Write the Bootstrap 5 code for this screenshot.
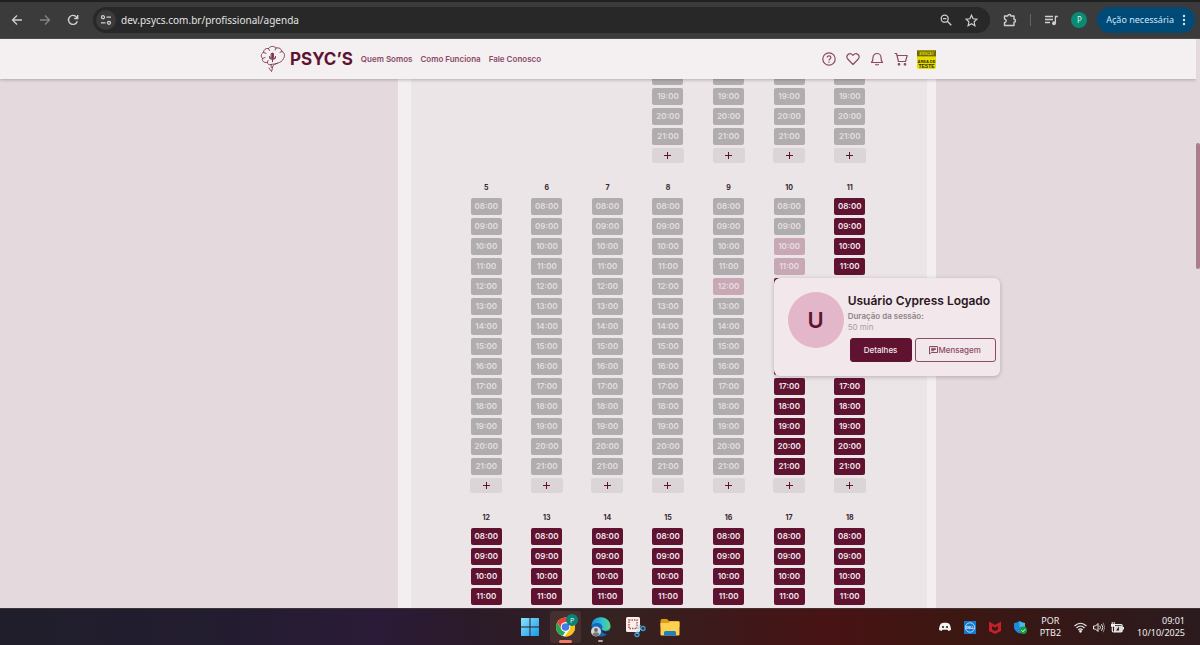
<!DOCTYPE html>
<html lang="pt-BR">
<head>
<meta charset="utf-8">
<meta name="viewport" content="width=device-width, initial-scale=1">
<title>Agenda | PSYC'S</title>
<link href="https://cdn.jsdelivr.net/npm/bootstrap@5.3.0/dist/css/bootstrap.min.css" rel="stylesheet">
<style>
:root { --wine: #5f1330; --wine-soft: #8b4a66; --ui: "Noto Sans", "Open Sans", sans-serif; --brand: "Inter", "Lato", sans-serif; }
body { font-family: var(--brand); font-size: 8px; line-height: 12px; }
button { font-family: inherit; }
.chrome-bar { background: #3b3b3b; height: 39px; border-top: 2px solid #1f2020; border-bottom: 1px solid #4c4c4c; padding: 0 5px 0 7px; gap: 10px; font-family: var(--ui); color: #dcdcdc; }
.tool { background: none; border: 0; padding: 0; width: 20px; height: 20px; color: #cfcfcf; display: grid; place-items: center; }
.address { background: #282828; border-radius: 13px; height: 26px; padding: 0 9px 0 3px; gap: 5px; }
.site-info { background: #3b3b3b; border-radius: 50%; }
.address input { background: none; border: 0; outline: 0; color: #e3e3e3; font-size: 10px; line-height: 16px; padding: 0; min-width: 0; }
.profile-dot { background: #0b8a74; color: #d8f5ee; width: 16px; height: 16px; border-radius: 50%; border: 0; padding: 0; font-size: 8px; line-height: 16px; }
.alert-pill { background: #004a77; color: #cfe6fb; border: 0; border-radius: 13px; height: 26px; padding: 0 9px; font-size: 9px; }
.viewport { background: #e4dade; }
.site-header { background: #f4f0f1; height: 40px; box-shadow: 0 1px 3px rgba(60, 40, 50, .3); z-index: 5; }
.site-width { width: 100%; max-width: 676px; margin: 0 auto; }
.brand-name { font-size: 17px; line-height: 24px; font-weight: 700; color: var(--wine); }
.site-link { color: var(--wine-soft); font-size: 8px; font-weight: 600; text-decoration: none; }
.header-actions { gap: 9px; }
.icon-button { background: none; border: 0; padding: 0; color: var(--wine-soft); width: 15px; height: 15px; display: grid; place-items: center; }
.avatar { width: 19px; height: 19px; display: block; }
.agenda { max-width: 538px; background: #ebe5e7; border: solid #f3eff0; border-width: 0 9px 0 13px; padding: 0 47px 0 45px; }
.calendar { margin-top: -11px; }
.week { display: grid; grid-template-columns: repeat(7, 1fr); margin-bottom: 19px; }
.day { display: flex; flex-direction: column; align-items: center; gap: 3px; }
.day-number { font-size: 7px; font-weight: 700; color: #35262c; margin-bottom: 1px; }
.slot { width: 31px; height: 17px; border: 0; border-radius: 2px; padding: 0; font-size: 8px; line-height: 17px; font-weight: 600; background: var(--wine); color: #f3e8ec; display: block; }
.slot.past { background: #b1adae; color: #e3dfe0; }
.slot.booked { background: #c8a8b5; color: #eadde2; }
.add-slot { width: 32px; height: 15px; border: 0; border-radius: 2px; padding: 0; background: #dcd5d8; color: var(--wine); display: grid; place-items: center; }
.session-pop { left: 0; top: 0; width: 226px; height: 98px; background: #f2e7eb; border-radius: 6px; box-shadow: 0 1px 4px rgba(60, 30, 45, .28); padding: 14px 4px 14px 14px; z-index: 3; }
.initial { width: 56px; height: 56px; border-radius: 50%; background: #e3b7c9; color: var(--wine); font-size: 22px; line-height: 56px; font-weight: 600; text-align: center; }
.session-name { font-size: 12px; line-height: 18px; font-weight: 600; color: #28171f; white-space: nowrap; }
.session-label { font-size: 8px; line-height: 12px; font-weight: 600; color: #8f858a; }
.session-time { font-size: 8px; line-height: 11px; color: #a79ea2; }
.session-actions { gap: 3px; margin: 5px 0 0 2px; }
.action { height: 24px; border-radius: 3px; border: 1px solid var(--wine-soft); font-size: 8px; font-weight: 500; padding: 0; background: none; color: var(--wine-soft); }
.action.solid { background: var(--wine); border-color: var(--wine); color: #f5e9ee; width: 62px; }
.scroll-track { width: 4px; background: #e4dade; padding-top: 104px; }
.scroll-thumb { height: 126px; background: #ab7d8d; border-radius: 2px; }
.taskbar { height: 37px; border-top: 1px solid #3f3234; background: linear-gradient(90deg, #201e2b 0, #231c30 20%, #2b1b38 31%, #2b1a28 40%, #342321 50%, #3d191b 60%, #481314 69%, #3c1712 80%, #2b1a1e 100%); font-family: var(--ui); color: #f2eeee; }
.task-app { width: 31px; height: 32px; border: 0; padding: 0; background: none; border-radius: 3px; }
.task-app.current { background: #45302f; }
.tray { right: 15px; top: 0; height: 36px; gap: 13px; font-size: 9px; line-height: 12px; }
.tray-status { gap: 6px; }
</style>
</head>
<body class="vh-100 d-flex flex-column overflow-hidden">

<div class="chrome-bar d-flex align-items-center flex-shrink-0">
  <div class="d-flex gap-2">
    <button class="tool" aria-label="Voltar"><svg width="12" height="12" viewBox="0 0 12 12" fill="none" stroke="currentColor" stroke-width="1.3"><path d="M11 6H2M6 1.5 1.5 6 6 10.5"/></svg></button>
    <button class="tool opacity-50" aria-label="Avançar"><svg width="12" height="12" viewBox="0 0 12 12" fill="none" stroke="currentColor" stroke-width="1.3"><path d="M1 6h9M6 1.5 10.500 6 6 10.500"/></svg></button>
    <button class="tool" aria-label="Recarregar"><svg width="12" height="12" viewBox="0 0 12 12" fill="none" stroke="currentColor" stroke-width="1.400"><path d="M10.300 7.200A4.500 4.500 0 1 1 9.600 3.200L10.500 4.300M10.700 1v3.500H7.200"/></svg></button>
  </div>
  <div class="address d-flex align-items-center flex-grow-1">
    <button class="tool site-info" aria-label="Informações do site"><svg width="12" height="12" viewBox="0 0 12 12" fill="none" stroke="currentColor" stroke-width="1.300"><circle cx="3" cy="3.200" r="1.500"/><path d="M6.500 3.200H11M1 8.800h4.500"/><circle cx="9" cy="8.800" r="1.500"/></svg></button>
    <input class="flex-grow-1" aria-label="Endereço" value="dev.psycs.com.br/profissional/agenda">
    <button class="tool" aria-label="Zoom"><svg width="12" height="12" viewBox="0 0 12 12" fill="none" stroke="currentColor" stroke-width="1.300"><circle cx="4.700" cy="4.700" r="3.500"/><path d="m7.300 7.300 4 4M3 4.700h3.400"/></svg></button>
    <button class="tool" aria-label="Favoritar"><svg width="13" height="13" viewBox="0 0 13 13" fill="none" stroke="currentColor" stroke-width="1.200"><path d="m6.500 1.200 1.600 3.600 3.900.4-2.900 2.600.8 3.900-3.400-2-3.400 2 .8-3.900L1 5.200l3.900-.4z"/></svg></button>
  </div>
  <button class="tool" aria-label="Extensões"><svg width="14" height="14" viewBox="0 0 14 14" fill="none" stroke="currentColor" stroke-width="1.400" stroke-linejoin="round"><path d="M1.500 3h3.300a1.500 1.500 0 0 1 3 0H11v3.300a1.500 1.500 0 0 1 0 3v3.200H1.500V9.500a1.700 1.700 0 0 0 0-3.400z"/></svg></button>
  <span class="vr my-auto" style="height:12px"></span>
  <button class="tool" aria-label="Mídia"><svg width="13" height="11" viewBox="0 0 13 11" fill="none" stroke="currentColor" stroke-width="1.300"><path d="M0 1.500h8M0 4.500h8M0 7.500h5M12.800 1.500h-2.400v6.700"/><circle cx="9" cy="8.300" r="1.300" fill="currentColor"/></svg></button>
  <button class="profile-dot" aria-label="Perfil">P</button>
  <button class="alert-pill d-flex align-items-center gap-2">Ação necessária <svg width="4" height="12" viewBox="0 0 4 12" fill="currentColor"><circle cx="2" cy="2" r="1.200"/><circle cx="2" cy="6" r="1.200"/><circle cx="2" cy="10" r="1.200"/></svg></button>
</div>

<div class="viewport d-flex flex-grow-1 overflow-hidden">
  <div class="d-flex flex-column flex-grow-1 overflow-hidden">
    <header class="site-header position-relative d-flex align-items-center flex-shrink-0">
      <div class="site-width d-flex align-items-center">
        <a class="d-flex align-items-center gap-1 text-decoration-none me-2" href="#">
          <svg width="26" height="28" viewBox="0 0 26 28" fill="none" stroke="#7b3550" stroke-width=".9" stroke-linecap="round"><path d="M17.500 18.200c-2 1.300-4 .6-6.500 1.300-2 .5-3.500-.5-3.700-2C4 18 2 16 2.500 13.500.5 11.500 1 8.500 3.500 7.500 3.500 4.500 6 3 8.500 3.500 10.500.8 14 .8 16 3c3-.8 5.500 1 6 3.500 3 1.500 3 5 1.500 7-.8 2.500-3.500 4-6 4.700-2 .6-4.500 1.300-5 3.800-.3 1.500-.2 3-1 4.500-1-1-1.500-2.500-2.500-3.500M11 19.500l.3 3M8.500 3.500l1 2M3.500 7.500l2.500.8M2.500 13.500l2.500-1M7.500 17.500l.5-2M16 3l-.8 2M22 6.500l-2 .8"/><path d="M12.500 8v8.500M9.500 11.500c0 3.500 6 3.500 6 0" stroke-width="1.100"/><path d="M11.500 8.500h2v4h-2z" fill="#7b3550"/></svg>
          <span class="brand-name">PSYC’S</span>
        </a>
        <nav class="d-flex gap-2">
          <a class="site-link" href="#">Quem Somos</a>
          <a class="site-link" href="#">Como Funciona</a>
          <a class="site-link" href="#">Fale Conosco</a>
        </nav>
        <div class="header-actions d-flex align-items-center ms-auto">
          <button class="icon-button" aria-label="Ajuda"><svg width="14" height="14" viewBox="0 0 14 14" fill="none" stroke="currentColor" stroke-width="1.200"><circle cx="7" cy="7" r="6.200"/><path d="M5.200 5.600c0-2.400 3.700-2.300 3.700 0C8.900 7 7 6.900 7 8.400M7 9.500v1.200"/></svg></button>
          <button class="icon-button" aria-label="Favoritos"><svg width="14" height="14" viewBox="0 0 14 14" fill="none" stroke="currentColor" stroke-width="1.200" stroke-linejoin="round"><path d="M7 12.500 1.700 7C-.7 4 3.300-.6 7 3.300c3.700-3.900 7.700.7 5.300 3.700z"/></svg></button>
          <button class="icon-button" aria-label="Notificações"><svg width="14" height="14" viewBox="0 0 14 14" fill="none" stroke="currentColor" stroke-width="1.200" stroke-linejoin="round"><path d="M1.500 10.500C3 9 3 7.500 3 5.500a4 4 0 0 1 8 0c0 2 0 3.500 1.500 5zM5.500 12c.5 1.300 2.500 1.300 3 0"/></svg></button>
          <button class="icon-button" aria-label="Carrinho"><svg width="14" height="14" viewBox="0 0 14 14" fill="none" stroke="currentColor" stroke-width="1.200" stroke-linejoin="round"><path d="M.5 1.500h2l2 8h7l1.700-6H3.200"/><circle cx="5" cy="12.300" r=".8" fill="currentColor"/><circle cx="11" cy="12.300" r=".8" fill="currentColor"/></svg></button>
          <a href="#" aria-label="Minha conta"><svg class="avatar" viewBox="0 0 19 19"><rect width="19" height="19" rx="2" fill="#e6dc00"/><rect width="19" height="7" rx="1" fill="#6d680f"/><path d="M1 .8h17M0 6.500h19" stroke="#b9b10d"/><g font-family="Liberation Sans, sans-serif" font-weight="700" text-anchor="middle"><text x="9.500" y="5" font-size="3" fill="#e6dc00">ATENÇÃO</text><text x="9.500" y="12.500" font-size="4" fill="#2b2908">ÁREA DE</text><text x="9.500" y="17.500" font-size="5" fill="#2b2908">TESTE</text></g></svg></a>
        </div>
      </div>
    </header>
    <main class="site-width d-flex flex-grow-1 justify-content-end" style="min-height:0">
      <section class="agenda w-100" aria-label="Agenda"><div class="calendar" id="calendar"></div></section>
    </main>
  </div>
  <div class="scroll-track flex-shrink-0"><div class="scroll-thumb"></div></div>
</div>

<footer class="taskbar position-relative d-flex align-items-center justify-content-center flex-shrink-0">
  <div class="d-flex gap-1">
    <button class="task-app" aria-label="Iniciar"><svg width="20" height="20" viewBox="0 0 20 20"><defs><linearGradient id="win" x2="1" y2="1"><stop stop-color="#8fe3ff"/><stop offset="1" stop-color="#139ae8"/></linearGradient></defs><path fill="url(#win)" d="M1 1h8.500v8.500H1zM10.500 1H19v8.500h-8.500zM1 10.500h8.500V19H1zM10.500 10.500H19V19h-8.500z"/></svg></button>
    <button class="task-app current" aria-label="Chrome"><svg width="31" height="32" viewBox="0 0 31 32"><circle cx="15.500" cy="16" r="9.500" fill="#fff"/><path d="M7.300 11.200A9.500 9.500 0 0 1 23.700 11.200H15.500L11.400 18.400z" fill="#ea4335"/><path d="M7.300 11.200 11.400 18.400l4.100 2.400-3 4.200A9.500 9.500 0 0 1 7.300 11.200" fill="#2aa552"/><path d="M23.700 11.200A9.500 9.500 0 0 1 14.500 25.500l5.100-7.100-1.500-7.200z" fill="#fbc116"/><circle cx="15.500" cy="16" r="4.800" fill="#fff"/><circle cx="15.500" cy="16" r="3.800" fill="#3f7ee8"/><circle cx="22" cy="9" r="6" fill="#0b8273"/><text x="22" y="11.500" font-size="7" font-family="Noto Sans, sans-serif" text-anchor="middle" fill="#d8f5ee">P</text><rect x="9" y="29" width="13" height="3" rx="1.500" fill="#ef7b62"/></svg></button>
    <button class="task-app" aria-label="Edge"><svg width="31" height="32" viewBox="0 0 31 32"><defs><linearGradient id="edge" x2="1"><stop stop-color="#1b8be0"/><stop offset=".6" stop-color="#30c3d2"/><stop offset="1" stop-color="#62d667"/></linearGradient></defs><circle cx="16" cy="16" r="9.500" fill="#1269b8"/><path d="M6.500 15C7 3 25 4 25.500 15c0 5-7 6-9 3 2-1 1-6-4-6-3 0-5 1-6 3z" fill="url(#edge)"/><path d="M16 18c2 3 6 3 9.500 1l-3 4.500c-4-.5-6-2.500-6.500-5.500" fill="#3a201f"/><circle cx="11" cy="20.500" r="5" fill="#d4d4d4"/><circle cx="11" cy="19" r="1.900" fill="#666"/><path d="M7.500 23.500c1-3 6-3 7 0-2 2-5 2-7 0" fill="#777"/><rect x="13" y="29" width="5" height="2" rx="1" fill="#aaa"/></svg></button>
    <button class="task-app" aria-label="Ferramenta de Captura"><svg width="22" height="22" viewBox="0 0 22 22"><rect x="2" y="1" width="14" height="15" rx="1.500" fill="#f2f0f0"/><rect x="5" y="4" width="8" height="8.500" fill="none" stroke="#d75138" stroke-width="1.500" stroke-dasharray="1.500 1"/><path d="m12 10 6 4M16 9l-3 9" stroke="#bfe2f5" stroke-width="1.500"/><g fill="none" stroke="#3a9ed8" stroke-width="1.300"><circle cx="19" cy="12.500" r="2"/><circle cx="13" cy="18.500" r="2"/></g></svg></button>
    <button class="task-app" aria-label="Explorador de Arquivos"><svg width="20" height="20" viewBox="0 0 20 20"><path d="M.5 3.500q0-1.500 1.500-1.500h5l2 2H18q1.500 0 1.500 1.500V10H.5z" fill="#dd9c11"/><path d="M.5 6h8l1.500-1.500h9.500v13q0 1-1 1h-17q-1 0-1-1z" fill="#fdd04d"/><path d="M4 18.500v-3q0-1.500 1.500-1.500h9q1.500 0 1.500 1.500v3z" fill="#1f7fc4"/></svg></button>
  </div>
  <div class="tray position-absolute d-flex align-items-center">
    <svg width="12" height="10" viewBox="0 0 12 10"><path d="M2 1.500 4.500.8h3l2.500.7c1.500 2 2 4.500 2 6.500L9.500 9 8.500 7.800h-5L2.500 9 0 8c0-2 .5-4.500 2-6.500" fill="#f4f4f4"/><circle cx="4" cy="5" r="1.100" fill="#3a1815"/><circle cx="8" cy="5" r="1.100" fill="#3a1815"/></svg>
    <svg width="12" height="13" viewBox="0 0 12 13"><rect width="12" height="13" fill="#1679cf"/><circle cx="6" cy="6.500" r="4.700" fill="none" stroke="#d9ecfa" stroke-width=".8"/><text x="6" y="7.500" font-size="3" font-weight="700" text-anchor="middle" font-family="Liberation Sans, sans-serif" fill="#fff">DELL</text></svg>
    <svg width="12" height="13" viewBox="0 0 12 13"><path d="M0 .5 6 4l6-3.500V10l-6 3-6-3zm3 4.500v3.500l3 1.500 3-1.500V5L6 6.700z" fill="#c5202a"/></svg>
    <svg width="13" height="13" viewBox="0 0 13 13"><path d="M5.500 0Q8 1.800 11 2v4c0 3-2.500 5-5.500 6.500C2.500 11 0 9 0 6V2Q3 1.800 5.500 0" fill="#1b8bdc"/><path d="M5.500 0Q8 1.800 11 2v4H5.500z" fill="#4fb6f0"/><circle cx="9.300" cy="9.300" r="3.700" fill="#189b43"/><path d="m7.500 9.300 1.400 1.400 2.300-2.500" stroke="#fff" fill="none"/></svg>
    <div class="text-center">POR<br>PTB2</div>
    <div class="tray-status d-flex align-items-center">
      <svg width="13" height="11" viewBox="0 0 13 11" fill="none" stroke="#eee" stroke-width="1.100"><path d="M.5 4Q6.500-1.500 12.500 4M2.500 6Q6.500 2 10.500 6M4.300 8Q6.500 5.800 8.700 8"/><circle cx="6.500" cy="9.300" r=".8" fill="#eee"/></svg>
      <svg width="12" height="11" viewBox="0 0 12 11" fill="none" stroke="#eee"><path d="M.5 4h2L5 1.500v8L2.500 7h-2zM6.700 3.700q1.500 1.800 0 3.600M8.500 2.200q2.800 3.300 0 6.600"/><path d="M10.200.8q3 4.700 0 9.400" opacity=".5"/></svg>
      <svg width="13" height="11" viewBox="0 0 13 11"><path d="M3 4h8v6H3z" fill="#eee" opacity=".9"/><path d="M3.500 2.600H10q1.200 0 1.200 1.200v5q0 1.200-1.200 1.200H2.500Q1.300 10 1.300 8.800V6" fill="none" stroke="#eee" stroke-width="1.200"/><path d="m5 8.500 3-4v4z" fill="#3a1815"/><path d="M11.500 5H13v2.500h-1.500zM0 2h4v2.500H2.500L1.500 6 0 4.500zM.7 0h1v2h-1zM2.700 0h1v2h-1z" fill="#eee"/></svg>
    </div>
    <div class="text-end">09:01<br>10/10/2025</div>
  </div>
</footer>

<template id="session-template">
  <div class="session-pop position-absolute d-flex text-start">
    <div class="initial flex-shrink-0 me-1">U</div>
    <div class="flex-grow-1">
      <div class="session-name">Usuário Cypress Logado</div>
      <div class="session-label">Duração da sessão:</div>
      <div class="session-time">50 min</div>
      <div class="session-actions d-flex">
        <button class="action solid">Detalhes</button>
        <button class="action flex-grow-1 d-flex align-items-center justify-content-center"><svg width="9" height="9" viewBox="0 0 9 9" fill="none" stroke="currentColor"><path d="M.5 8.200V.5h8v6H2.200zM2.200 2.300h4.600M2.200 3.500h4.600M2.200 4.700h3"/></svg>Mensagem</button>
      </div>
    </div>
  </div>
</template>

<script src="https://cdn.jsdelivr.net/npm/bootstrap@5.3.0/dist/js/bootstrap.bundle.min.js"></script>
<script>
const booked = { 9: [12], 10: [10, 11] };
const weeks = [
  { days: [null, null, null, 1, 2, 3, 4], from: 18, to: 21 },
  { days: [5, 6, 7, 8, 9, 10, 11], from: 8, to: 21 },
  { days: [12, 13, 14, 15, 16, 17, 18], from: 8, to: 11 }
];
function slotState(day, hour) {
  if ((booked[day] || []).includes(hour)) return 'booked';
  return day < 10 || (day === 10 && hour < 10) ? 'past' : '';
}
// Slots under the open session card keep their place but carry no label.
const covered = (day, hour) => (day === 10 || day === 11) && hour >= 12 && hour <= 16;
const plus = '<svg width="7" height="7" viewBox="0 0 7 7" stroke="currentColor"><path d="M3.500 0v7M0 3.500h7"/></svg>';
document.getElementById('calendar').innerHTML = weeks.map(week =>
  '<div class="week">' + week.days.map(day => {
    if (!day) return '<div></div>';
    let html = '<div class="day">';
    if (week.from === 8) html += `<div class="day-number">${day}</div>`;
    for (let hour = week.from; hour <= week.to; hour++) {
      const label = String(hour).padStart(2, '0') + ':00';
      html += covered(day, hour)
        ? `<div class="position-relative"${day === 10 && hour === 12 ? ' id="open-session"' : ''}><div class="slot"></div></div>`
        : `<button class="slot ${slotState(day, hour)}">${label}</button>`;
    }
    if (week.to === 21) html += `<button class="add-slot" aria-label="Adicionar horário">${plus}</button>`;
    return html + '</div>';
  }).join('') + '</div>').join('');
document.getElementById('open-session').append(document.getElementById('session-template').content.cloneNode(true));
</script>
</body>
</html>
